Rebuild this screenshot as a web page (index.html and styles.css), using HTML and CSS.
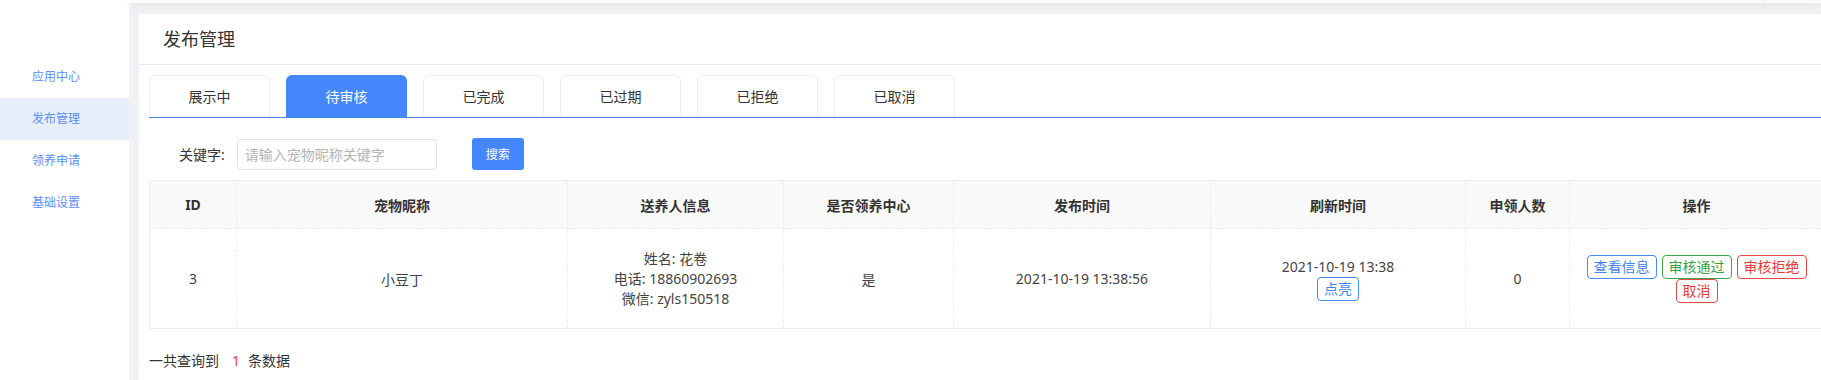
FILE: index.html
```html
<!DOCTYPE html>
<html lang="zh-CN">
<head>
    <meta charset="UTF-8">
    <meta name="viewport" content="width=device-width, initial-scale=1.0">
    <title>发布管理</title>
    <link rel="stylesheet" href="styles.css">
</head>
<body>
    <div class="layout">
        <!-- 左侧菜单 -->
        <aside class="side">
            <ul class="menu">
                <li>应用中心</li>
                <li class="on">发布管理</li>
                <li>领养申请</li>
                <li>基础设置</li>
            </ul>
        </aside>
        <div class="main">
            <div class="topbar"><span class="sep"></span></div>
            <div class="content">
                <div class="panel">
                    <div class="panel-title">发布管理</div>
                    <div class="panel-body">
                        <!-- 状态切换 -->
                        <div class="tabs">
                            <div class="tab">展示中</div>
                            <div class="tab on">待审核</div>
                            <div class="tab">已完成</div>
                            <div class="tab">已过期</div>
                            <div class="tab">已拒绝</div>
                            <div class="tab">已取消</div>
                        </div>
                        <!-- 搜索 -->
                        <div class="search">
                            <label class="search-label">关键字:</label>
                            <input class="search-input" type="text" placeholder="请输入宠物昵称关键字">
                            <button class="search-btn">搜索</button>
                        </div>
                        <!-- 列表 -->
                        <table class="list">
                            <colgroup>
                                <col style="width:87px">
                                <col style="width:331px">
                                <col style="width:216px">
                                <col style="width:170px">
                                <col style="width:257px">
                                <col style="width:255px">
                                <col style="width:104px">
                                <col style="width:254px">
                            </colgroup>
                            <thead>
                                <tr>
                                    <th>ID</th>
                                    <th>宠物昵称</th>
                                    <th>送养人信息</th>
                                    <th>是否领养中心</th>
                                    <th>发布时间</th>
                                    <th>刷新时间</th>
                                    <th>申领人数</th>
                                    <th>操作</th>
                                </tr>
                            </thead>
                            <tbody>
                                <tr>
                                    <td>3</td>
                                    <td>小豆丁</td>
                                    <td>
                                        <div class="line">姓名: 花卷</div>
                                        <div class="line">电话: 18860902693</div>
                                        <div class="line">微信: zyls150518</div>
                                    </td>
                                    <td>是</td>
                                    <td>2021-10-19 13:38:56</td>
                                    <td>
                                        <div class="line">2021-10-19 13:38</div>
                                        <span class="btn-line blue">点亮</span>
                                    </td>
                                    <td>0</td>
                                    <td>
                                        <div class="ops">
                                            <span class="btn-line blue">查看信息</span>
                                            <span class="btn-line green">审核通过</span>
                                            <span class="btn-line red">审核拒绝</span>
                                            <span class="btn-line red">取消</span>
                                        </div>
                                    </td>
                                </tr>
                            </tbody>
                        </table>
                        <p class="total">一共查询到<span class="num">1</span>条数据</p>
                    </div>
                </div>
            </div>
        </div>
    </div>
</body>
</html>
```
FILE: styles.css
```css
html,body{
    margin:0;
    height:100%;
}
body{
    font-family:"Noto Sans","Noto Sans CJK SC",sans-serif;
    font-size:14px;
    color:#333;
    background:#eff2f5;
    overflow:hidden;
}
.layout{
    display:flex;
    height:100vh;
}
/* 左侧菜单 */
.side{
    width:129px;
    flex:none;
    background:#fff;
    padding-top:56px;
    box-sizing:border-box;
}
.menu{
    list-style:none;
    margin:0;
    padding:0;
}
.menu li{
    height:42px;
    line-height:42px;
    padding-left:32px;
    font-size:12px;
    color:#5d90f2;
}
.menu li.on{
    background:#e6eefc;
}
.main{
    flex:1;
    min-width:0;
}
.topbar{
    height:3px;
    background:#fafafa;
    box-shadow:0 2px 6px rgba(0,0,0,.07);
    display:flex;
    justify-content:flex-end;
}
.sep{
    width:1px;
    background:#e6e6e6;
    margin-right:57px;
}
.content{
    padding:11px 0 0 10px;
}
.panel{
    width:1694px;
    height:366px;
    background:#fff;
}
.panel-title{
    height:50px;
    line-height:50px;
    padding-left:24px;
    font-size:18px;
    color:#333;
    border-bottom:1px solid #ebebeb;
}
.panel-body{
    padding:10px 10px 0;
}
/* 状态切换 */
.tabs{
    display:flex;
    border-bottom:1px solid #4a84e4;
}
.tab{
    width:121px;
    height:42px;
    box-sizing:border-box;
    margin-right:16px;
    border:1px solid #efefef;
    border-bottom:0;
    border-radius:6px 6px 0 0;
    text-align:center;
    line-height:42px;
    color:#333;
}
.tab.on{
    background:#4587fc;
    border-color:#4587fc;
    color:#fff;
}
/* 搜索 */
.search{
    display:flex;
    align-items:center;
    height:32px;
    margin-top:20px;
    padding-left:30px;
}
.search-input{
    width:200px;
    height:31px;
    box-sizing:border-box;
    margin-left:12px;
    padding:0 7px;
    border:1px solid #dfe1e6;
    border-radius:4px;
    font-family:inherit;
    font-size:14px;
    color:#333;
    outline:none;
}
.search-input::placeholder{
    color:#b4b4b4;
}
.search-btn{
    width:52px;
    height:32px;
    margin-left:35px;
    border:0;
    border-radius:3px;
    background:#4587fc;
    color:#fff;
    font-family:inherit;
    font-size:12px;
}
/* 列表 */
.list{
    width:1674px;
    margin-top:10px;
    border-collapse:collapse;
    table-layout:fixed;
    border:1px solid #ededed;
    color:#444;
}
.list th,.list td{
    border:1px dashed #ececec;
    text-align:center;
    vertical-align:middle;
    padding:0 10px;
}
.list th{
    height:47px;
    background:#f9f9f9;
    color:#333;
    font-weight:bold;
}
.list td{
    height:99px;
}
.line{
    line-height:20px;
}
.btn-line{
    display:inline-block;
    height:24px;
    line-height:22px;
    padding:0 6px;
    border:1px solid;
    border-radius:4px;
    box-sizing:border-box;
    font-size:14px;
    background:#fff;
}
.blue{color:#3f84f4;border-color:#4a8af5;}
.green{color:#37a047;border-color:#3ea64e;}
.red{color:#e53a3a;border-color:#e84545;}
.ops{
    display:flex;
    flex-wrap:wrap;
    justify-content:center;
    column-gap:5px;
}
.total{
    margin:22px 0 0;
    line-height:20px;
    color:#333;
}
.num{
    color:#f33;
    margin:0 8px 0 13px;
}
```
